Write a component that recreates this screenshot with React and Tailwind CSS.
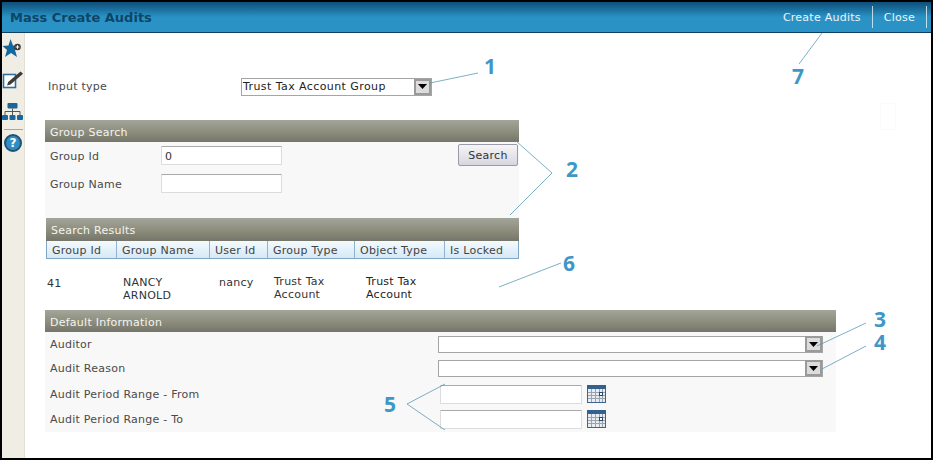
import React from "react";

const Caret = () => (
  <span className="flex h-[16px] w-[17px] shrink-0 items-center justify-center border-2 border-[#9a9a9a] bg-[#dcdcdc]">
    <svg width="9" height="5" viewBox="0 0 9 5"><path d="M0 0h9L4.5 5z" fill="#000" /></svg>
  </span>
);

const Bar = ({ title, className = "" }) => (
  <div className={`flex items-center bg-gradient-to-b from-[#a3a59a] via-[#8e8f7e] to-[#75766a] pl-[5px] text-[#f4f4f0] ${className}`}>
    {title}
  </div>
);

const Calendar = () => (
  <svg width="19" height="18" viewBox="0 0 19 18" className="shrink-0">
    <rect x="0.5" y="0.5" width="18" height="17" fill="#e8edf3" stroke="#3d6390" />
    <rect x="0" y="0" width="19" height="4" fill="#33608f" />
    <path d="M1 7.5h17M1 10.5h17M1 13.5h17M4.5 4v13M8.5 4v13M12.5 4v13M15.5 4v13" stroke="#9aa3ad" strokeWidth="1" />
    <rect x="12.5" y="7.5" width="3" height="3" fill="#fff" stroke="#244d78" />
  </svg>
);

const Label = ({ children, className = "" }) => <span className={`text-[#4a4a4a] ${className}`}>{children}</span>;

const Input = ({ className = "", value = "" }) => (
  <div className={`flex items-center rounded-[1px] border border-[#dcdcdc] border-t-[#a9a9a9] bg-white pl-[3px] text-[#333] ${className}`}>{value}</div>
);

const Select = ({ className = "", value = "" }) => (
  <div className={`flex items-center justify-between border border-[#a5a5a5] bg-white pl-px tracking-[0.42px] text-[#222] ${className}`}>
    <span>{value}</span>
    <Caret />
  </div>
);

const Num = ({ n, className }) => (
  <span className={`absolute font-['Open_Sans',sans-serif] text-[21px] leading-none font-bold tracking-normal text-[#3e97c7] ${className}`}>{n}</span>
);

const cols = [
  ["Group Id", "w-[70px]"],
  ["Group Name", "w-[93px]"],
  ["User Id", "w-[58px]"],
  ["Group Type", "w-[87px]"],
  ["Object Type", "w-[90px]"],
  ["Is Locked", "w-[73px]"],
];

export default function App() {
  return (
    <div className="relative flex h-[460px] w-[933px] flex-col overflow-hidden bg-black p-[2px] font-['DejaVu_Sans','Liberation_Sans',sans-serif] text-[11px] leading-[13px] tracking-[0.25px]">
      <header className="flex h-[31px] shrink-0 items-center justify-between border-b border-[#10405f] bg-gradient-to-b from-[#0d4f7a] via-[#2a92c5] via-50% to-[#2a92c5] pl-2">
        <h1 className="text-[13px] font-bold tracking-normal text-[#0d4569]">Mass Create Audits</h1>
        <nav className="flex h-[22px] items-center pr-[4px] text-white/90">
          <span className="flex h-full items-center border-r border-white/70 pr-[11px]">Create Audits</span>
          <span className="flex h-full items-center border-r border-white/70 px-[11px]">Close</span>
        </nav>
      </header>

      <div className="flex min-h-0 flex-1 bg-white">
        <aside className="flex w-[23px] shrink-0 flex-col items-center border-r border-[#e2dfd5] bg-[#f0ede4] pt-[6px]">
          <svg width="22" height="18" viewBox="0 0 22 18">
            <path d="M8.5 0l2.5 6.500 7 .5-5 4 2 7-6-4-6 4 2-7-4.500-4 6-.5z" fill="#13679f" />
            <circle cx="15.500" cy="8" r="3.300" fill="#3a3a3a" />
            <path d="M13.700 8h3.600M15.500 6.200v3.600" stroke="#fff" strokeWidth="1" />
          </svg>
          <svg width="22" height="18" viewBox="0 0 22 18" className="mt-[14px]">
            <rect x="1.500" y="3.500" width="12" height="13" fill="#fff" stroke="#2d6f9f" strokeWidth="1.600" />
            <path d="M5 14.500l1.200-3.500L18.500 0.500 21 2.800 8.500 13.500z" fill="#3b3b3b" />
          </svg>
          <svg width="22" height="17" viewBox="0 0 22 17" className="mt-[14px]">
            <rect x="5.500" y="0" width="10" height="5.500" rx="1" fill="#1a659c" />
            <path d="M10.500 5.500v3.500M3 12V8.500h15V12M10.500 8.500V12" stroke="#555" fill="none" />
            <rect x="0" y="12" width="6" height="5" rx="1" fill="#1a659c" />
            <rect x="7.500" y="12" width="6" height="5" rx="1" fill="#1a659c" />
            <rect x="15" y="12" width="6" height="5" rx="1" fill="#1a659c" />
          </svg>
          <div className="mt-[9px] h-px w-[19px] bg-[#a8a69e]" />
          <div className="mt-[4px] flex h-[18px] w-[18px] items-center justify-center rounded-full border-2 border-[#1f5273] bg-[#2f8cc4] text-[12px] font-bold tracking-normal text-white">?</div>
        </aside>

        <main className="min-w-0 flex-1 pl-[20px] pt-[45px]">
          <div className="flex h-[17px] items-center">
            <Label className="ml-[3px] w-[193px]">Input type</Label>
            <Select className="h-[18px] w-[191px]" value="Trust Tax Account Group" />
          </div>

          <Bar title="Group Search" className="mt-[25px] h-[22px] w-[474px] pt-[2px]" />
          <section className="relative h-[76px] w-[474px] bg-[#f8f8f8]">
            <div className="flex flex-col gap-[9px] pl-[5px] pt-[4px]">
              <div className="flex items-center">
                <Label className="w-[111px] pt-px">Group Id</Label>
                <Input className="h-[19px] w-[121px] pt-px" value="0" />
              </div>
              <div className="flex items-center">
                <Label className="w-[111px] pt-px">Group Name</Label>
                <Input className="h-[19px] w-[121px]" />
              </div>
            </div>
            <button className="absolute right-px top-[2px] h-[22px] w-[60px] rounded-[2px] border border-[#9a9aaa] bg-gradient-to-b from-[#f6f6f8] to-[#d6d6de] text-[#333]">Search</button>
          </section>

          <div className="ml-px w-[473px]">
            <Bar title="Search Results" className="h-[23px] pt-px" />
            <div className="flex h-[18px] border-x border-b border-[#7fa6c4] bg-gradient-to-b from-[#f4fafd] to-[#d5e9f6]">
              {cols.map(([t, w], i) => (
                <div key={t} className={`${w} flex items-center pl-[5px] pt-px text-[#444] ${i < 5 ? "border-r border-[#8fb3cf]" : ""}`}>{t}</div>
              ))}
            </div>
          </div>

          <div className="ml-[2px] flex h-[51px] w-[474px] items-start text-[#333]">
            <span className="mt-[18px] w-[76px]">41</span>
            <span className="mt-[17px] w-[96px]">NANCY<br />ARNOLD</span>
            <span className="mt-[17px] w-[55px]">nancy</span>
            <span className="mt-[16px] w-[92px]">Trust Tax<br />Account</span>
            <span className="mt-[16px] w-[90px] text-[#222]">Trust Tax<br />Account</span>
          </div>

          <Bar title="Default Information" className="h-[22px] w-[791px] pt-[2px]" />
          <section className="flex h-[100px] w-[791px] flex-col bg-[#f8f8f8] pl-[5px] pt-[3px]">
            <div className="flex h-[18px] items-center">
              <Label className="w-[388px]">Auditor</Label>
              <Select className="h-[17px] w-[385px]" />
            </div>
            <div className="mt-[6px] flex h-[18px] items-center">
              <Label className="w-[388px] pt-px">Audit Reason</Label>
              <Select className="h-[17px] w-[385px]" />
            </div>
            <div className="mt-[7px] flex h-[20px] items-center">
              <Label className="w-[390px]">Audit Period Range - From</Label>
              <Input className="h-[19px] w-[142px]" />
              <span className="ml-[5px]"><Calendar /></span>
            </div>
            <div className="mt-[5px] flex h-[20px] items-center">
              <Label className="w-[390px]">Audit Period Range - To</Label>
              <Input className="h-[19px] w-[142px]" />
              <span className="ml-[5px]"><Calendar /></span>
            </div>
          </section>
        </main>
      </div>

      <div className="absolute left-[880px] top-[103px] h-[27px] w-[16px] border border-[#fbfbfb]" />

      <svg className="pointer-events-none absolute left-0 top-0" width="933" height="460" fill="none" stroke="#5b9ab8" strokeWidth="0.8">
        <path d="M430 83L478 73" />
        <path d="M516 141L552 173L510 215" />
        <path d="M822 33L799 64" />
        <path d="M499 287L561 263" />
        <path d="M817 346L866 323" />
        <path d="M822 369L866 346" />
        <path d="M445 384L407 404L445 430" />
      </svg>
      <Num n="1" className="left-[484px] top-[56px]" />
      <Num n="2" className="left-[566px] top-[159px]" />
      <Num n="3" className="left-[874px] top-[309px]" />
      <Num n="4" className="left-[874px] top-[332px]" />
      <Num n="5" className="left-[384px] top-[394px]" />
      <Num n="6" className="left-[563px] top-[253px]" />
      <Num n="7" className="left-[792px] top-[66px]" />
    </div>
  );
}
